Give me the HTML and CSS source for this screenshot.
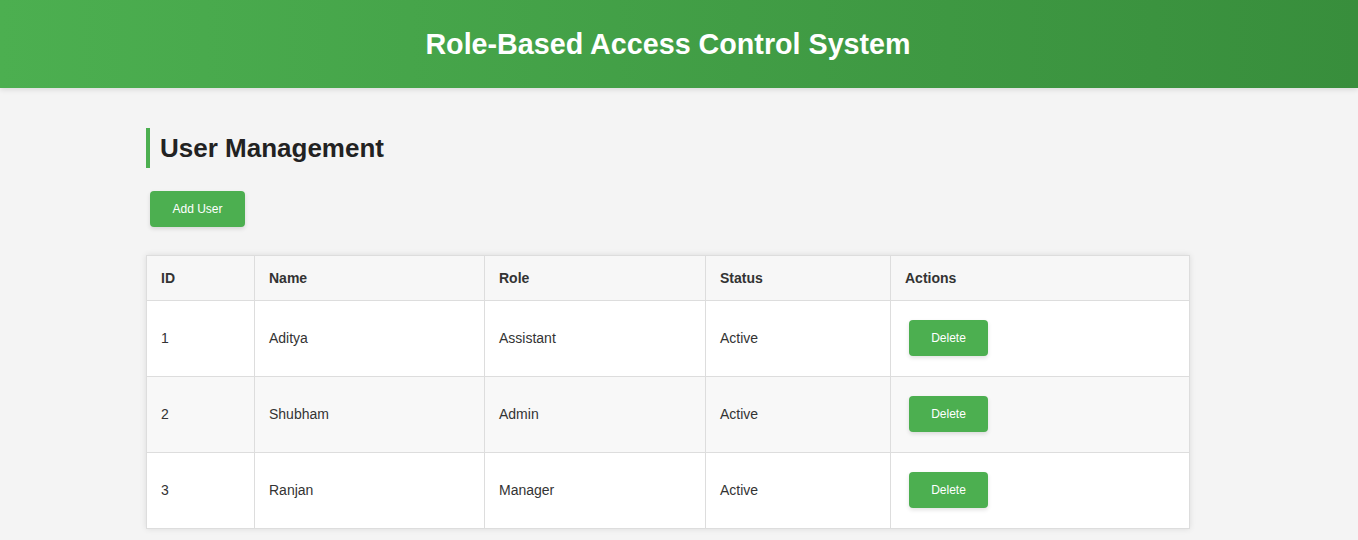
FILE: index.html
```html
<!DOCTYPE html>
<html lang="en">
<head>
<meta charset="utf-8">
<title>Role-Based Access Control System</title>
<link rel="stylesheet" href="styles.css">
</head>
<body>
<header class="site-header">
  <h1 class="site-title">Role-Based Access Control System</h1>
</header>
<main class="page">
  <section class="container">
    <h2 class="section-title">User Management</h2>
    <div class="toolbar">
      <button class="btn btn-add" type="button">Add User</button>
    </div>
    <table class="user-table">
      <colgroup>
        <col class="col-id">
        <col class="col-name">
        <col class="col-role">
        <col class="col-status">
        <col class="col-actions">
      </colgroup>
      <thead>
        <tr>
          <th>ID</th>
          <th>Name</th>
          <th>Role</th>
          <th>Status</th>
          <th>Actions</th>
        </tr>
      </thead>
      <tbody>
        <tr>
          <td>1</td>
          <td>Aditya</td>
          <td>Assistant</td>
          <td>Active</td>
          <td><button class="btn btn-delete" type="button">Delete</button></td>
        </tr>
        <tr>
          <td>2</td>
          <td>Shubham</td>
          <td>Admin</td>
          <td>Active</td>
          <td><button class="btn btn-delete" type="button">Delete</button></td>
        </tr>
        <tr>
          <td>3</td>
          <td>Ranjan</td>
          <td>Manager</td>
          <td>Active</td>
          <td><button class="btn btn-delete" type="button">Delete</button></td>
        </tr>
      </tbody>
    </table>
  </section>
</main>
</body>
</html>
```

FILE: styles.css
```css
* {
  box-sizing: border-box;
}

html,
body {
  margin: 0;
  padding: 0;
}

body {
  background: #f4f4f4;
  font-family: "Liberation Sans", Arial, Helvetica, sans-serif;
  color: #333;
}

.site-header {
  height: 88px;
  display: flex;
  align-items: center;
  justify-content: center;
  padding-right: 22px;
  background: linear-gradient(to right, #4caf50, #388e3c);
  box-shadow: 0 2px 5px rgba(0, 0, 0, 0.1);
}

.site-title {
  margin: 0;
  color: #fff;
  font-size: 28.7px;
  line-height: 34px;
  font-weight: bold;
}

.page {
  padding-right: 22px;
  padding-bottom: 270px;
}

.container {
  width: 1044px;
  margin: 40px auto 40px;
}

.section-title {
  margin: 0 0 23px;
  padding: 5px 0 5px 10px;
  border-left: 4px solid #4caf50;
  font-size: 26px;
  line-height: 30px;
  color: #222;
}

.toolbar {
  display: flex;
  margin-bottom: 28px;
}

.btn {
  border: none;
  border-radius: 4px;
  background: #4caf50;
  color: #fff;
  font-family: "Liberation Sans", Arial, Helvetica, sans-serif;
  font-size: 12px;
  line-height: 14px;
  padding: 11px 22px;
  box-shadow: 0 2px 4px rgba(0, 0, 0, 0.12);
  cursor: pointer;
}

.btn-add {
  margin-left: 4px;
  width: 95px;
}

.user-table {
  width: 1043px;
  border-collapse: collapse;
  table-layout: fixed;
  background: #fff;
  box-shadow: 0 0 6px rgba(0, 0, 0, 0.1);
  font-size: 14px;
}

.col-id { width: 108px; }
.col-name { width: 230px; }
.col-role { width: 221px; }
.col-status { width: 185px; }
.col-actions { width: 299px; }

.user-table th,
.user-table td {
  border: 1px solid #ddd;
  padding: 14px 14px;
  text-align: left;
  vertical-align: middle;
  line-height: 16px;
}

.user-table th {
  background: #f7f7f7;
  font-weight: bold;
  color: #333;
}

.user-table td {
  color: #333;
  padding-top: 13px;
  padding-bottom: 15px;
}

.user-table tbody tr:nth-child(even) td {
  background: #f8f8f8;
}

.btn-delete {
  display: block;
  width: 79px;
  margin: 6px 4px 5px 4px;
}
```
